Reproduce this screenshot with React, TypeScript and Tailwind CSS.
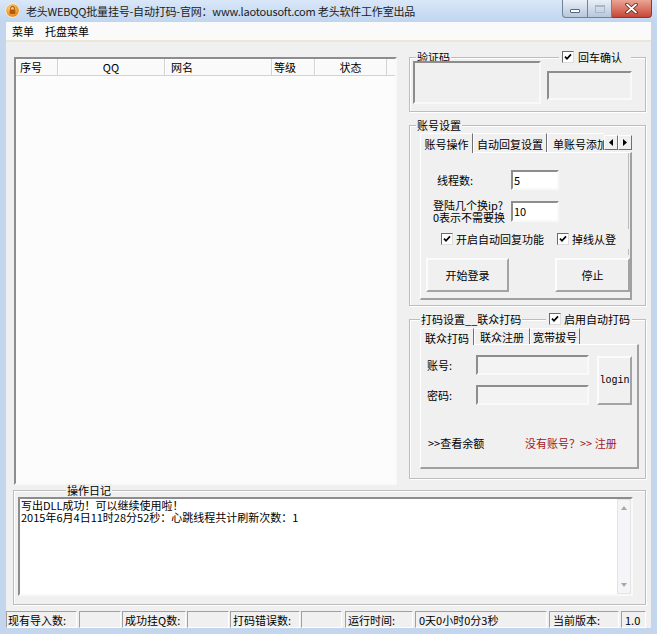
import React from 'react';

const FONT = "font-['Noto_Sans_CJK_SC','Noto_Sans',sans-serif]";

const sunken =
  'border-2 border-t-[#8d8d8d] border-l-[#8d8d8d] border-b-[#f9f9f9] border-r-[#f9f9f9]';
const raised =
  'border-2 border-t-[#fcfcfc] border-l-[#fcfcfc] border-b-[#a3a3a3] border-r-[#a3a3a3]';
const etched = 'border border-[#bdbdbd] shadow-[inset_1px_1px_0_#ffffff,1px_1px_0_#ffffff]';
const cellBorder =
  'border border-t-[#a0a0a0] border-l-[#a0a0a0] border-b-[#ffffff] border-r-[#ffffff]';

function CheckBox({ className = '' }: { className?: string }) {
  return (
    <span
      className={`inline-flex h-[12px] w-[12px] shrink-0 items-center justify-center border border-t-[#6a6a6a] border-l-[#6a6a6a] border-b-[#dcdcdc] border-r-[#dcdcdc] bg-white ${className}`}
    >
      <svg width="8" height="8" viewBox="0 0 8 8">
        <path d="M1 3.6 L3 5.8 L7 1.4" stroke="#000" strokeWidth="1.7" fill="none" />
      </svg>
    </span>
  );
}

function Tab({
  children,
  w,
  active = false,
  clip = false,
  small = false,
}: {
  children: React.ReactNode;
  w: string;
  active?: boolean;
  clip?: boolean;
  small?: boolean;
}) {
  const h = small ? (active ? 'h-[17px]' : 'h-[16px]') : active ? 'h-[20px]' : 'h-[19px]';
  return (
    <div
      className={`flex shrink-0 items-center overflow-hidden whitespace-nowrap border-l border-t border-l-white border-t-white pt-[1px] ${h} ${w} ${
        clip ? 'justify-start pl-[5px]' : 'justify-center border-r border-r-[#707070]'
      } ${active ? 'relative z-10 -mb-[1px] bg-[#f0f0f0]' : ''}`}
    >
      {children}
    </div>
  );
}

function ArrowBtn({ left = false }: { left?: boolean }) {
  return (
    <div className="mb-[2px] flex h-[15px] w-[14px] shrink-0 items-center justify-center border border-t-white border-l-white border-b-[#6f6f6f] border-r-[#6f6f6f] bg-[#f0f0f0]">
      <svg width="4" height="7" viewBox="0 0 4 7">
        <path d={left ? 'M4 0 L0 3.5 L4 7 Z' : 'M0 0 L4 3.5 L0 7 Z'} fill="#000" />
      </svg>
    </div>
  );
}

function TitleBar() {
  return (
    <div className="flex h-[22px] items-start bg-linear-to-b from-[#d9e7f8] to-[#c0d5ef]">
      <svg className="ml-[5px] mt-[3px]" width="15" height="15" viewBox="0 0 15 15">
        <defs>
          <radialGradient id="ico" cx="40%" cy="35%" r="70%">
            <stop offset="0" stopColor="#ffd889" />
            <stop offset="1" stopColor="#e27b0e" />
          </radialGradient>
        </defs>
        <circle cx="7.5" cy="7.5" r="6.8" fill="url(#ico)" stroke="#fff4de" strokeWidth="0.8" />
        <path d="M5.6 6.6 V5.3 a1.9 1.9 0 0 1 3.8 0 V6.6" stroke="#9c4a00" strokeWidth="1" fill="none" />
        <rect x="4.6" y="6.5" width="5.8" height="4.4" rx="0.6" fill="#b45a06" />
      </svg>
      <span className="ml-[6px] mt-[5px] whitespace-nowrap text-[11px] leading-[12px] tracking-[-0.2px] text-[#1b1b1b]">
        老头WEBQQ批量挂号-自动打码-官网：www.laotousoft.com 老头软件工作室出品
      </span>
      <div className="ml-auto mr-[5px] flex">
        <div className="flex h-[18px] w-[26px] items-end justify-center rounded-bl-[4px] border border-t-0 border-[#6f8098] bg-linear-to-b from-[#e9eff8] to-[#b7c7db] pb-[4px]">
          <span className="h-[4px] w-[10px] rounded-[1px] border border-[#54667e] bg-white" />
        </div>
        <div className="flex h-[18px] w-[24px] items-center justify-center border border-l-0 border-t-0 border-[#6f8098] bg-linear-to-b from-[#e9eff8] to-[#b7c7db]">
          <span className="h-[8px] w-[10px] border border-[#aab6c6] border-t-2 bg-transparent" />
        </div>
        <div className="flex h-[18px] w-[40px] items-center justify-center rounded-br-[4px] border border-l-0 border-t-0 border-[#8a3a30] bg-linear-to-b from-[#eaa595] to-[#c54436]">
          <svg width="13" height="11" viewBox="0 0 13 11">
            <path d="M2 1.5 L11 9.5 M11 1.5 L2 9.5" stroke="#5a1c14" strokeWidth="3.4" strokeLinecap="round" />
            <path d="M2 1.5 L11 9.5 M11 1.5 L2 9.5" stroke="#ffffff" strokeWidth="1.8" strokeLinecap="round" />
          </svg>
        </div>
      </div>
    </div>
  );
}

function ListView() {
  const cols = [
    { label: '序号', w: 'w-[42px]', align: 'justify-start pl-[4px]' },
    { label: 'QQ', w: 'w-[107px]', align: 'justify-center' },
    { label: '网名', w: 'w-[107px]', align: 'justify-start pl-[6px]' },
    { label: '等级', w: 'w-[43px]', align: 'justify-start pl-[2px]' },
    { label: '状态', w: 'w-[72px]', align: 'justify-center' },
  ];
  return (
    <div className={`ml-[8px] mt-[15px] h-[428px] w-[383px] bg-[#fcfcfc] ${sunken}`}>
      <div className="flex h-[17px]">
        {cols.map((c) => (
          <div
            key={c.label}
            className={`flex h-[17px] shrink-0 items-center border-b border-r border-b-[#d3d3d3] border-r-[#d3d3d3] bg-[#fafafa] shadow-[inset_1px_1px_0_#ffffff] ${c.w} ${c.align}`}
          >
            {c.label}
          </div>
        ))}
        <div className="h-[17px] flex-1 border-b border-b-[#d3d3d3] bg-[#fafafa]" />
      </div>
    </div>
  );
}

function CaptchaBox() {
  return (
    <div className={`mt-[15px] h-[55px] ${etched}`}>
      <div className="-mt-[7px] flex h-[12px] items-center justify-between">
        <span className="ml-[6px] bg-[#f0f0f0] px-[1px]">验证码</span>
        <span className="mr-[14px] flex items-center gap-[4px] bg-[#f0f0f0] pl-[3px] pr-[9px]">
          <CheckBox />
          回车确认
        </span>
      </div>
      <div className="-mt-[2px] flex items-start">
        <div className={`ml-[3px] h-[43px] w-[128px] ${sunken}`} />
        <div className={`ml-[6px] mt-[10px] h-[29px] w-[85px] ${sunken}`} />
      </div>
    </div>
  );
}

function AccountBox() {
  return (
    <div className={`mt-[13px] h-[181px] ${etched}`}>
      <div className="-mt-[7px] flex h-[12px] items-center">
        <span className="ml-[6px] bg-[#f0f0f0] px-[1px]">账号设置</span>
      </div>
      <div className="ml-[10px] mt-[2px] w-[212px]">
        <div className="flex h-[19px] items-end">
          <Tab active w="w-[53px]">账号操作</Tab>
          <Tab w="w-[74px]">自动回复设置</Tab>
          <Tab clip w="w-[57px]">单账号添加</Tab>
          <ArrowBtn left />
          <ArrowBtn />
        </div>
        <div className="relative h-[148px] border-l border-t border-b-2 border-r-2 border-l-white border-t-white border-b-[#a0a0a0] border-r-[#a0a0a0]">
          <div className="absolute right-[1px] top-0 h-[76px] w-[1px] bg-[#bcbcbc]" />
          <div className="absolute right-[1px] top-[96px] h-[6px] w-[1px] bg-[#bcbcbc]" />
          <div className="mt-[17px] flex items-center">
            <span className="w-[90px] pl-[16px]">线程数:</span>
            <div className={`flex h-[20px] w-[48px] items-center bg-white pl-[1px] ${sunken}`}>5</div>
          </div>
          <div className="mt-[9px] flex items-center">
            <div className="w-[90px] pl-[12px] leading-[12px]">
              <div>登陆几个换ip?</div>
              <div>0表示不需要换</div>
            </div>
            <div className={`flex h-[21px] w-[48px] items-center bg-white pl-[1px] ${sunken}`}>10</div>
          </div>
          <div className="mt-[10px] flex h-[12px] items-center">
            <CheckBox className="ml-[20px]" />
            <span className="ml-[3px]">开启自动回复功能</span>
            <CheckBox className="ml-[13px]" />
            <span className="ml-[3px]">掉线从登</span>
          </div>
          <div className="mt-[13px] flex">
            <button className={`ml-[5px] h-[34px] w-[83px] bg-[#f0f0f0] ${raised}`}>开始登录</button>
            <button className={`ml-[46px] h-[34px] w-[75px] bg-[#f0f0f0] ${raised}`}>停止</button>
          </div>
        </div>
      </div>
    </div>
  );
}

function DamaBox() {
  return (
    <div className={`mt-[13px] h-[160px] ${etched}`}>
      <div className="-mt-[7px] flex h-[12px] items-center justify-between">
        <span className="ml-[10px] bg-[#f0f0f0] px-[1px]">打码设置__联众打码</span>
        <span className="mr-[13px] flex items-center gap-[3px] bg-[#f0f0f0] pl-[3px] pr-[2px]">
          <CheckBox />
          启用自动打码
        </span>
      </div>
      <div className="ml-[10px] mt-[3px] w-[219px]">
        <div className="flex h-[16px] items-end">
          <Tab small active w="w-[54px]">联众打码</Tab>
          <Tab small w="w-[56px]">联众注册</Tab>
          <Tab small w="w-[50px]">宽带拔号</Tab>
        </div>
        <div className="h-[125px] border-l border-t border-b-2 border-r-2 border-l-white border-t-white border-b-[#a0a0a0] border-r-[#a0a0a0]">
          <div className="mt-[10px] flex items-start">
            <div className="flex flex-col">
              <div className="flex items-center">
                <span className="w-[55px] pl-[6px]">账号:</span>
                <div className={`h-[20px] w-[113px] bg-[#f3f3f3] ${sunken}`} />
              </div>
              <div className="mt-[10px] flex items-center">
                <span className="w-[55px] pl-[6px]">密码:</span>
                <div className={`h-[20px] w-[113px] bg-[#f3f3f3] ${sunken}`} />
              </div>
            </div>
            <button
              className={`ml-[8px] mt-[1px] h-[49px] w-[35px] bg-[#f0f0f0] font-['Liberation_Mono',monospace] text-[10px] ${raised}`}
            >
              login
            </button>
          </div>
          <div className="mt-[32px] flex items-center">
            <span className="w-[104px] pl-[7px]">&gt;&gt;查看余额</span>
            <span className="text-[#a3171b]">没有账号？&gt;&gt; 注册</span>
          </div>
        </div>
      </div>
    </div>
  );
}

function LogBox() {
  return (
    <div className={`ml-[7px] mt-[5px] h-[115px] w-[633px] ${etched}`}>
      <div className="-mt-[7px] flex h-[12px] items-center">
        <span className="ml-[52px] bg-[#f0f0f0] px-[1px]">操作日记</span>
      </div>
      <div className={`ml-[4px] mt-[1px] flex h-[99px] w-[615px] bg-white ${sunken}`}>
        <div className="flex-1 pl-[1px] leading-[12px]">
          <div>写出DLL成功！可以继续使用啦！</div>
          <div>2015年6月4日11时28分52秒：心跳线程共计刷新次数：1</div>
        </div>
        <div className="flex w-[14px] flex-col items-center justify-between border border-[#e4e4e4] bg-[#f5f5f7] py-[6px]">
          <svg width="6" height="4" viewBox="0 0 6 4">
            <path d="M0 4 L3 0 L6 4 Z" fill="#a8a8a8" />
          </svg>
          <svg width="6" height="4" viewBox="0 0 6 4">
            <path d="M0 0 L3 4 L6 0 Z" fill="#a8a8a8" />
          </svg>
        </div>
      </div>
    </div>
  );
}

function StatusBar() {
  const cell = `flex h-[17px] shrink-0 items-center whitespace-nowrap ${cellBorder}`;
  return (
    <div className="mt-[6px] flex h-[17px]">
      <div className={`${cell} w-[71px] pl-[1px]`}>现有导入数:</div>
      <div className={`${cell} ml-[2px] w-[42px]`} />
      <div className={`${cell} ml-[1px] w-[64px] pl-[2px]`}>成功挂Q数:</div>
      <div className={`${cell} ml-[1px] w-[42px]`} />
      <div className={`${cell} ml-[1px] w-[70px] pl-[2px]`}>打码错误数:</div>
      <div className={`${cell} ml-[1px] w-[41px]`} />
      <div className={`${cell} ml-[3px] w-[68px] pl-[2px]`}>运行时间:</div>
      <div className={`${cell} ml-[2px] w-[132px] pl-[3px]`}>0天0小时0分3秒</div>
      <div className={`${cell} ml-[2px] w-[70px] pl-[3px]`}>当前版本:</div>
      <div className={`${cell} ml-[2px] w-[25px] pl-[3px]`}>1.0</div>
    </div>
  );
}

export default function App() {
  return (
    <div
      className={`flex h-[634px] w-[657px] flex-col overflow-hidden bg-[#c3d6ee] text-[11px] leading-[12px] text-black ${FONT}`}
    >
      <TitleBar />
      <div className="mx-[6px] flex h-[606px] flex-col bg-[#f0f0f0]">
        <div className="flex h-[18px] items-center gap-[11px] bg-[#fafafa] pl-[6px]">
          <span>菜单</span>
          <span>托盘菜单</span>
        </div>
        <div className="h-[2px] bg-[#ebe6d6]" />
        <div className="flex h-[443px] items-start">
          <ListView />
          <div className="ml-[12px] flex w-[237px] flex-col">
            <CaptchaBox />
            <AccountBox />
            <DamaBox />
          </div>
        </div>
        <LogBox />
        <StatusBar />
      </div>
    </div>
  );
}
